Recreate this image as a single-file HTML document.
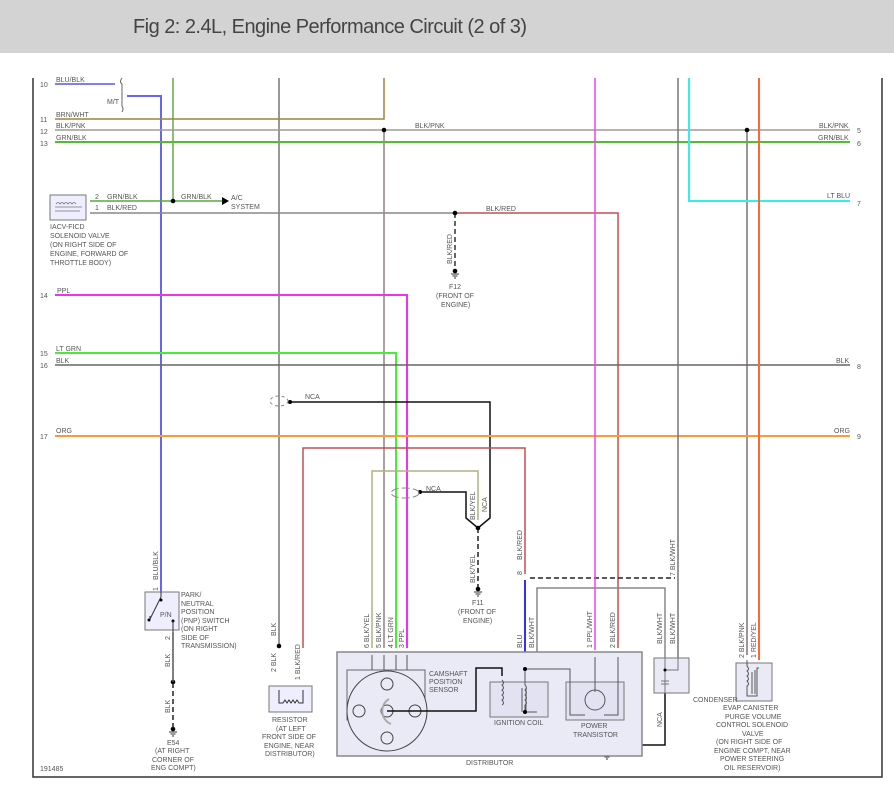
<!DOCTYPE html>
<html><head><meta charset="utf-8"><style>
html,body{margin:0;padding:0;background:#fff;width:894px;height:795px;overflow:hidden}
svg{display:block}
text{font-family:"Liberation Sans",Arial,sans-serif;fill:#555;font-size:7px}
.t{font-size:6.8px}
</style></head><body>
<svg width="894" height="795" viewBox="0 0 894 795" xmlns="http://www.w3.org/2000/svg">
<rect x="0" y="0" width="894" height="53" fill="#d3d3d3"/>
<text x="133" y="33" style="font-size:20px;fill:#444" textLength="394">Fig 2: 2.4L, Engine Performance Circuit (2 of 3)</text>
<g fill="none" stroke-width="1.5">
<path d="M33 78V777H882V78" stroke="#333"/>
</g>
<g fill="none" stroke-width="1.5">
<path d="M55 84H115" stroke="#5555ee"/>
<path d="M127 96H161V592" stroke="#6666ee" stroke-width="2"/>
<path d="M173 78V201" stroke="#66aa44"/>
<path d="M279 78V645" stroke="#777"/>
<path d="M384 78V119H55" stroke="#a08040"/>
<path d="M55 130H850" stroke="#a09898"/>
<path d="M384 130V648" stroke="#908080"/>
<path d="M747 130V655" stroke="#807070"/>
<path d="M55 142H850" stroke="#55bb33" stroke-width="2"/>
<path d="M90 201H222" stroke="#55aa33"/>
<path d="M90 213H455" stroke="#888"/>
<path d="M455 213H618V648" stroke="#c05050"/>
<path d="M455 213V270" stroke="#333" stroke-dasharray="5,3"/>
<path d="M55 295H407V648" stroke="#ee33ee" stroke-width="2"/>
<path d="M55 353H396V648" stroke="#44ee33" stroke-width="2"/>
<path d="M55 365H850" stroke="#666"/>
<path d="M290 402H490V518L478 528L466 518V492H420" stroke="#111"/>
<path d="M55 436H850" stroke="#ff9933" stroke-width="2"/>
<path d="M303 648V448H525V574" stroke="#c05050"/>
<path d="M372 648V471H478V520" stroke="#b0b080"/>
<path d="M478 528V588" stroke="#222" stroke-dasharray="5,3"/>
<path d="M525 580V655" stroke="#3333ee" stroke-width="2"/>
<path d="M530 578H675" stroke="#222" stroke-dasharray="5,3"/>
<path d="M537 655V588H665V693" stroke="#888"/>
<path d="M665 693V745H607V752" stroke="#111"/>
<path d="M678 78V670" stroke="#777"/>
<path d="M689 78V201H850" stroke="#33eeee" stroke-width="2"/>
<path d="M595 78V650" stroke="#ee44ee" stroke-width="1.5"/>
<path d="M759 78V660" stroke="#ff6633" stroke-width="2"/>
<path d="M122 78Q119 82 122 84V106Q124 109 122 112" stroke="#666" stroke-width="1"/>
</g>
<g fill="#000">
<circle cx="384" cy="130" r="2.3"/><circle cx="747" cy="130" r="2.3"/>
<circle cx="173" cy="201" r="2.3"/><circle cx="455" cy="213" r="2.3"/>
<circle cx="455" cy="271" r="2.3"/><circle cx="478" cy="528" r="2.3"/>
<circle cx="478" cy="589" r="2.3"/><circle cx="173" cy="682" r="2.3"/>
<circle cx="173" cy="729" r="2.3"/><circle cx="279" cy="646" r="2.3"/>
<circle cx="607" cy="752" r="2.3"/><circle cx="290" cy="402" r="2"/><circle cx="420" cy="492" r="2"/>
<path d="M222 197L229 201L222 205Z"/>
</g>
<g stroke="#333" stroke-width="1" fill="none">
<path d="M451 274H459M452.5 276H457.5M454 278H456"/>
<path d="M474 592H482M475.5 594H480.5M477 596H479"/>
<path d="M169 732H177M170.5 734H175.5M172 736H174"/>
<path d="M603 755H611M604.5 757H609.5M606 759H608"/>
<path d="M173 632V682" stroke="#555" stroke-width="1.5"/>
<path d="M173 683V729" stroke="#222" stroke-width="1.5" stroke-dasharray="5,3"/>
<ellipse cx="279" cy="401" rx="9" ry="5" stroke="#888" stroke-dasharray="3,3"/>
<ellipse cx="405" cy="493" rx="14" ry="5" stroke="#888" stroke-dasharray="8,3"/>
</g>
<rect x="50" y="195" width="36" height="25" fill="#eef" stroke="#777"/>
<path d="M55 207H82M55 211H80M56 204q2-3 4 0q2-3 4 0q2-3 4 0q2-3 4 0q2-3 4 0" stroke="#777" fill="none" stroke-width=".8"/>
<rect x="145" y="592" width="34" height="38" fill="#eef" stroke="#777"/>
<path d="M161 597L150 619M161 597V592M150 619V616" stroke="#333" fill="none"/>
<circle cx="161" cy="600" r="1.5"/><circle cx="149" cy="620" r="1.5"/><circle cx="173" cy="621" r="1.5"/>
<path d="M173 621V632" stroke="#333"/>
<text x="160" y="617">P/N</text>
<rect x="269" y="686" width="43" height="26" fill="#eef" stroke="#777"/>
<path d="M279 690V703H283l2-3 2 3 2-3 2 3 2-3 2 3 2-3 2 3H303V690" stroke="#333" fill="none"/>
<rect x="337" y="652" width="305" height="104" fill="#eaeaf6" stroke="#888" stroke-width="1.5"/>
<rect x="347" y="670" width="78" height="50" fill="none" stroke="#666"/>
<circle cx="387" cy="711" r="40" fill="#eaeaf6" stroke="#444"/>
<g fill="none" stroke="#444">
<circle cx="387" cy="684" r="6"/><circle cx="387" cy="738" r="6"/><circle cx="359" cy="711" r="6"/><circle cx="415" cy="711" r="6"/><circle cx="387" cy="711" r="6"/>
<path d="M372 655V670M384 655V670M396 655V670M407 655V670" stroke="#555"/>
<path d="M387 711H476V668H502V676" stroke="#111" stroke-width="1.5"/>
<path d="M391 724A14 14 0 0 1 389 699" stroke="#aaa" stroke-width="2"/>
</g>
<rect x="490" y="682" width="58" height="35" fill="#e2e2f2" stroke="#777"/>
<rect x="566" y="682" width="58" height="38" fill="#e2e2f2" stroke="#777"/>
<g fill="none" stroke="#555">
<path d="M502 680q3 3 0 5q3 3 0 5q3 3 0 5q3 3 0 5q3 3 0 5"/>
<path d="M522 688V712M526 688V712"/>
<path d="M525 669V685q3 3 0 5q3 3 0 5q3 3 0 5q3 3 0 5V712H537"/>
<path d="M525 669H570V715H585"/>
<circle cx="595" cy="700" r="10"/>
<path d="M595 657V692M618 657V715H604"/>
</g>
<circle cx="525" cy="669" r="2"/><circle cx="525" cy="712" r="2"/>
<rect x="654" y="658" width="35" height="35" fill="#eaeaf6" stroke="#777"/>
<path d="M665 658V693M678 658V670H665M661 681H669M661 684H669" stroke="#777" fill="none"/>
<circle cx="665" cy="670" r="1.5"/>
<rect x="736" y="663" width="36" height="38" fill="#eaeaf6" stroke="#777"/>
<path d="M747 660V666q3 3 0 5q3 3 0 5q3 3 0 5q3 3 0 5V696H757V668H759M755 670V694M752 672V694" stroke="#555" fill="none"/>
<g class="t">
<text x="40" y="87">10</text><text x="56" y="82">BLU/BLK</text><text x="107" y="104">M/T</text>
<text x="40" y="122">11</text><text x="56" y="117">BRN/WHT</text>
<text x="40" y="134">12</text><text x="56" y="128">BLK/PNK</text><text x="415" y="128">BLK/PNK</text><text x="819" y="128">BLK/PNK</text>
<text x="40" y="146">13</text><text x="56" y="140">GRN/BLK</text><text x="818" y="140">GRN/BLK</text>
<text x="857" y="133">5</text><text x="857" y="146">6</text><text x="857" y="206">7</text><text x="827" y="198">LT BLU</text>
<text x="95" y="199">2</text><text x="107" y="199">GRN/BLK</text><text x="181" y="199">GRN/BLK</text>
<text x="95" y="210">1</text><text x="107" y="210">BLK/RED</text><text x="231" y="200">A/C</text><text x="231" y="209">SYSTEM</text>
<text x="486" y="211">BLK/RED</text>
<text x="50" y="229">IACV-FICD</text><text x="50" y="238">SOLENOID VALVE</text><text x="50" y="247">(ON RIGHT SIDE OF</text><text x="50" y="256">ENGINE, FORWARD OF</text><text x="50" y="265">THROTTLE BODY)</text>
<text x="449" y="289">F12</text><text x="436" y="298">(FRONT OF</text><text x="441" y="307">ENGINE)</text>
<text x="40" y="298">14</text><text x="57" y="293">PPL</text>
<text x="40" y="356">15</text><text x="56" y="351">LT GRN</text>
<text x="40" y="368">16</text><text x="56" y="363">BLK</text><text x="836" y="363">BLK</text><text x="857" y="369">8</text>
<text x="305" y="399">NCA</text>
<text x="40" y="439">17</text><text x="56" y="433">ORG</text><text x="834" y="433">ORG</text><text x="857" y="439">9</text>
<text x="426" y="491">NCA</text>
<text x="472" y="605">F11</text><text x="458" y="614">(FRONT OF</text><text x="463" y="623">ENGINE)</text>
<text x="181" y="597">PARK/</text><text x="181" y="606">NEUTRAL</text><text x="181" y="614">POSITION</text><text x="181" y="623">(PNP) SWITCH</text><text x="181" y="631">(ON RIGHT</text><text x="181" y="640">SIDE OF</text><text x="181" y="648">TRANSMISSION)</text>
<text x="167" y="745">E54</text><text x="155" y="753">(AT RIGHT</text><text x="152" y="762">CORNER OF</text><text x="151" y="770">ENG COMPT)</text>
<text x="272" y="722">RESISTOR</text><text x="276" y="731">(AT LEFT</text><text x="262" y="739">FRONT SIDE OF</text><text x="264" y="748">ENGINE, NEAR</text><text x="265" y="756">DISTRIBUTOR)</text>
<text x="40" y="771">191485</text>
<text x="429" y="676">CAMSHAFT</text><text x="429" y="684">POSITION</text><text x="429" y="692">SENSOR</text>
<text x="494" y="725">IGNITION COIL</text><text x="581" y="728">POWER</text><text x="573" y="737">TRANSISTOR</text>
<text x="466" y="765">DISTRIBUTOR</text><text x="693" y="702">CONDENSER</text>
<text x="723" y="710">EVAP CANISTER</text><text x="725" y="719">PURGE VOLUME</text><text x="716" y="727">CONTROL SOLENOID</text><text x="742" y="736">VALVE</text><text x="716" y="744">(ON RIGHT SIDE OF</text><text x="714" y="753">ENGINE COMPT, NEAR</text><text x="720" y="761">POWER STEERING</text><text x="724" y="770">OIL RESERVOIR)</text>
</g>
<g class="t">
<text transform="translate(158,580) rotate(-90)">BLU/BLK</text>
<text transform="translate(158,591) rotate(-90)">1</text>
<text transform="translate(170,667) rotate(-90)">BLK</text>
<text transform="translate(170,640) rotate(-90)">2</text>
<text transform="translate(170,713) rotate(-90)">BLK</text>
<text transform="translate(276,636) rotate(-90)">BLK</text>
<text transform="translate(276,672) rotate(-90)">2 BLK</text>
<text transform="translate(300,680) rotate(-90)">1 BLK/RED</text>
<text transform="translate(452,264) rotate(-90)">BLK/RED</text>
<text transform="translate(475,520) rotate(-90)">BLK/YEL</text>
<text transform="translate(487,512) rotate(-90)">NCA</text>
<text transform="translate(475,583) rotate(-90)">BLK/YEL</text>
<text transform="translate(522,560) rotate(-90)">BLK/RED</text>
<text transform="translate(522,575) rotate(-90)">8</text>
<text transform="translate(522,648) rotate(-90)">BLU</text>
<text transform="translate(534,648) rotate(-90)">BLK/WHT</text>
<text transform="translate(369,648) rotate(-90)">6 BLK/YEL</text>
<text transform="translate(381,648) rotate(-90)">5 BLK/PNK</text>
<text transform="translate(393,648) rotate(-90)">4 LT GRN</text>
<text transform="translate(404,648) rotate(-90)">3 PPL</text>
<text transform="translate(592,648) rotate(-90)">1 PPL/WHT</text>
<text transform="translate(615,648) rotate(-90)">2 BLK/RED</text>
<text transform="translate(662,644) rotate(-90)">BLK/WHT</text>
<text transform="translate(675,644) rotate(-90)">BLK/WHT</text>
<text transform="translate(675,576) rotate(-90)">7 BLK/WHT</text>
<text transform="translate(662,727) rotate(-90)">NCA</text>
<text transform="translate(744,658) rotate(-90)">2 BLK/PNK</text>
<text transform="translate(756,658) rotate(-90)">1 RED/YEL</text>
</g>
</svg>
</body></html>
